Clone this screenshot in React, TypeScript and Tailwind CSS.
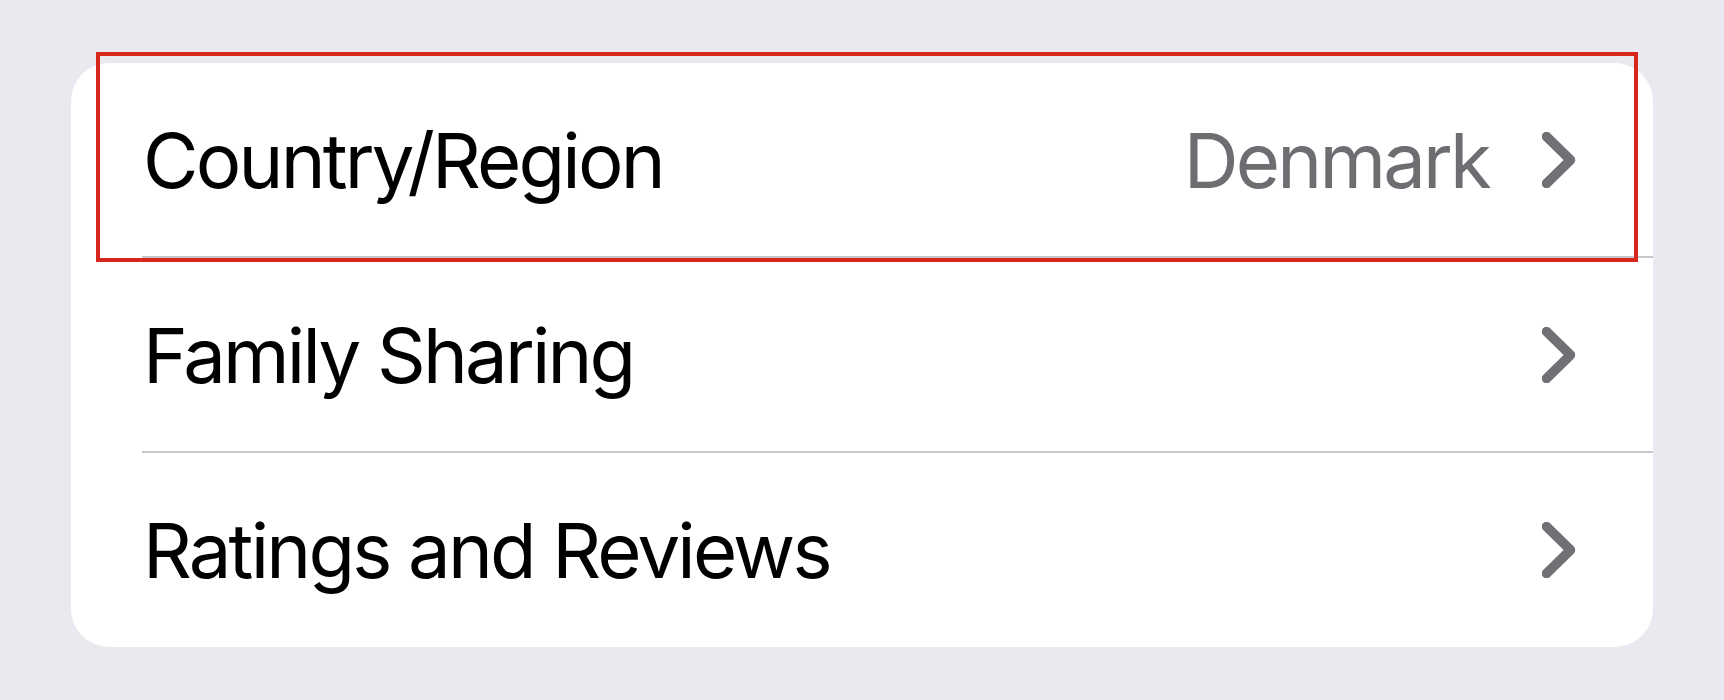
import React from 'react';

type Row = { label: string; value?: string };

const rows: Row[] = [
  { label: 'Country/Region', value: 'Denmark' },
  { label: 'Family Sharing' },
  { label: 'Ratings and Reviews' },
];

const Chevron: React.FC = () => (
  <svg width="34" height="56" viewBox="0 0 34 56" fill="none" className="shrink-0">
    <polyline
      points="4.5,4.5 28.5,28 4.5,51.5"
      stroke="#707075"
      strokeWidth={9.5}
      strokeLinecap="round"
      strokeLinejoin="round"
    />
  </svg>
);

export default function App() {
  return (
    <div
      className="min-h-[700px] w-full bg-[#e9e9ef] pl-[71px] pt-[63px] pr-[71px]"
      style={{ fontFamily: 'Inter, "Noto Sans", sans-serif' }}
    >
      <div className="relative w-[1582px]">
        <div className="bg-white rounded-[38px] overflow-hidden">
          {rows.map((row, i) => (
            <div key={row.label}>
              {i > 0 && <div className="ml-[71px] h-[2px] bg-[#c8c8cc]" />}
              <div
                className={`flex items-center pl-[72px] pr-[77px] ${i === 2 ? 'h-[194px]' : 'h-[193px]'}`}
              >
                <span className="flex-1 text-[76px] leading-none text-black tracking-[-2.8px]">
                  {row.label}
                </span>
                {row.value && (
                  <span className="mr-[53px] text-[76px] leading-none text-[#6d6d72] tracking-[-2.8px]">
                    {row.value}
                  </span>
                )}
                <Chevron />
              </div>
            </div>
          ))}
        </div>

        {/* highlight annotation */}
        <div className="absolute left-[25px] top-[-11px] w-[1542px] h-[210px] border-[4px] border-[#d9261c] pointer-events-none" />
      </div>
    </div>
  );
}
